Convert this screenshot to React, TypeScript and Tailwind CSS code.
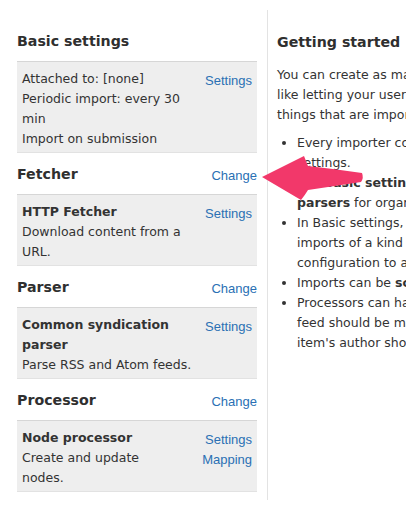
import React from "react";

const body = { fontFamily: '"DejaVu Sans", Verdana, sans-serif' };
const link = { fontFamily: '"Liberation Sans", Arial, sans-serif' };

function Heading({ title, change }: { title: string; change?: boolean }) {
  return (
    <div className="flex items-center justify-between h-[41px] pt-[2px]">
      <h2 className="text-[14.2px] font-bold text-[#2f2f2f]" style={body}>
        {title}
      </h2>
      {change && (
        <a className="text-[13px] text-[#2a70b4] mt-[3px]" style={link}>
          Change
        </a>
      )}
    </div>
  );
}

function Box({ children, links }: { children: React.ReactNode; links: string[] }) {
  return (
    <div className="flex justify-between bg-[#eeeeee] border-t border-[#d6d6d6] border-b border-b-[#e2e2e2] pl-[5px] pr-[5px] pt-[7px] pb-[3px]">
      <div className="w-[175px] text-[12.5px] leading-[20px] text-[#333]" style={body}>
        {children}
      </div>
      <div className="flex flex-col items-end pt-[2px]">
        {links.map((l) => (
          <a key={l} className="text-[13px] leading-[20px] text-[#2a70b4]" style={link}>
            {l}
          </a>
        ))}
      </div>
    </div>
  );
}

const Line = ({ children }: { children: React.ReactNode }) => (
  <div className="whitespace-nowrap">{children}</div>
);

export default function App() {
  return (
    <div className="relative w-[406px] h-[530px] overflow-hidden bg-white">
      <div className="flex pl-[17px] pt-[10px]">
        <div className="w-[240px] shrink-0 pt-[10px]">
          <Heading title="Basic settings" />
          <Box links={["Settings"]}>
            <div>Attached to: [none]</div>
            <div>
              Periodic import: every 30
              <br />
              min
            </div>
            <div>Import on submission</div>
          </Box>
          <Heading title="Fetcher" change />
          <Box links={["Settings"]}>
            <div className="font-bold">HTTP Fetcher</div>
            <div>
              Download content from a
              <br />
              URL.
            </div>
          </Box>
          <Heading title="Parser" change />
          <Box links={["Settings"]}>
            <div className="font-bold">
              Common syndication
              <br />
              parser
            </div>
            <div>Parse RSS and Atom feeds.</div>
          </Box>
          <Heading title="Processor" change />
          <Box links={["Settings", "Mapping"]}>
            <div className="font-bold">Node processor</div>
            <div>
              Create and update
              <br />
              nodes.
            </div>
          </Box>
        </div>
        <div
          className="ml-[10px] border-l border-[#e3e3e3] pl-[9px] h-[490px] shrink-0 w-[300px] pt-[10px] text-[12.5px] leading-[20px] text-[#333]"
          style={body}
        >
          <div className="h-[41px] flex items-center pt-[2px]">
            <h2 className="text-[14.2px] font-bold text-[#2f2f2f]">Getting started</h2>
          </div>
          <div className="mt-[4px]">
            <Line>You can create as many importers as you need for things</Line>
            <Line>like letting your users import content from feeds, or for</Line>
            <Line>things that are important to your site.</Line>
          </div>
          <ul className="mt-[8px] list-disc pl-[20px]">
            <li>
              <Line>Every importer consists of basic settings, a fetcher,</Line>
              <Line>settings.</Line>
            </li>
            <li>
              <Line>
                The <b>basic settings</b> define the general behavior
              </Line>
              <Line>
                <b>parsers</b> for organizing it and <b>processors</b>
              </Line>
            </li>
            <li>
              <Line>In Basic settings, you can attach an importer to</Line>
              <Line>imports of a kind should be created, for example</Line>
              <Line>configuration to a content type.</Line>
            </li>
            <li>
              <Line>
                Imports can be <b>scheduled periodically</b>
              </Line>
            </li>
            <li>
              <Line>Processors can have mappings in addition to</Line>
              <Line>feed should be mapped to what content fields.</Line>
              <Line>item's author should be mapped to a node's body.</Line>
            </li>
          </ul>
        </div>
      </div>
      <svg
        className="absolute left-0 top-0 pointer-events-none"
        width="406"
        height="530"
        viewBox="0 0 406 530"
      >
        <path
          d="M262 177 L304 156 Q306 161 308 166 Q335 169 362 173 Q364 178 361 182 Q335 186 308 190 Q305 195 301 200 Z"
          fill="#f2386a"
        />
      </svg>
    </div>
  );
}
